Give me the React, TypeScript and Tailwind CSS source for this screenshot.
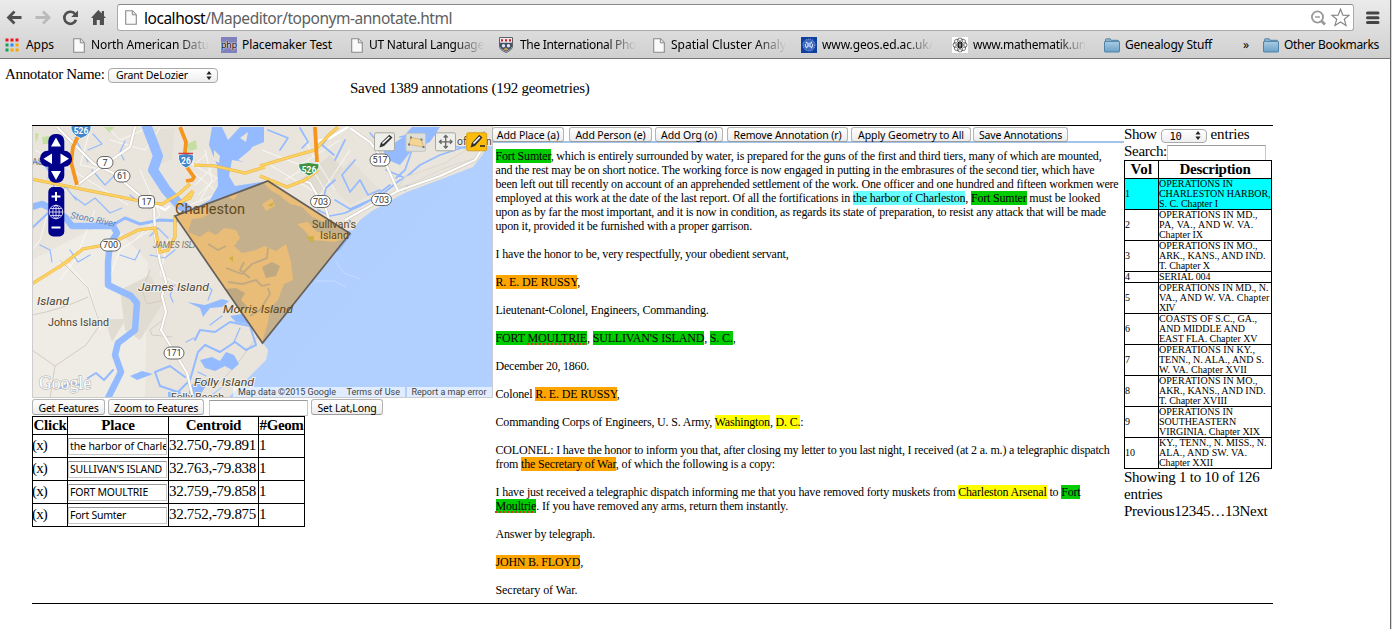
import { useLayoutEffect, useRef } from "react";
import type { ReactNode } from "react";

/* A single line of text whose tracking is tuned so it spans `w` pixels. */
function Fit({ w, children, className = "" }: { w: number; children: ReactNode; className?: string }) {
  const ref = useRef<HTMLSpanElement>(null);
  useLayoutEffect(() => {
    const el = ref.current;
    if (!el) return;
    el.style.letterSpacing = "0px";
    const natural = el.getBoundingClientRect().width;
    const count = el.textContent?.length || 1;
    el.style.letterSpacing = `${(w - natural) / count}px`;
  }, [w]);
  return (
    <span ref={ref} className={`inline-block whitespace-nowrap ${className}`}>
      {children}
    </span>
  );
}

const ui = "font-['Noto_Sans','Open_Sans',sans-serif]";

/* ---------- Browser chrome ---------- */

function PageIcon() {
  return (
    <svg width="12" height="15" viewBox="0 0 12 15" className="shrink-0">
      <path d="M0.7 0.7H7.5L11.3 4.6V14.3H0.7Z" fill="#fafafa" stroke="#8a8a8a" strokeWidth="1.1" />
      <path d="M7.3 0.9V4.8H11.1" fill="#e4e4e4" stroke="#8a8a8a" />
    </svg>
  );
}

function FolderIcon() {
  return (
    <svg width="16" height="15" viewBox="0 0 16 15" className="shrink-0">
      <defs>
        <linearGradient id="folder" x1="0" y1="0" x2="0" y2="1">
          <stop offset="0" stopColor="#a9cce3" />
          <stop offset="1" stopColor="#6ba1c7" />
        </linearGradient>
      </defs>
      <path d="M1.5 4V1.6Q1.5 0.8 2.3 0.8H6.2L7.2 2.3H14.2V4" fill="#8db9d6" stroke="#56829f" />
      <rect x="0.5" y="3.4" width="15" height="10.6" rx="0.6" fill="url(#folder)" stroke="#4f83a8" />
    </svg>
  );
}

function PhpIcon() {
  return (
    <span className="flex h-4 w-4 shrink-0 items-center justify-center bg-[#8080bd] font-['Liberation_Sans',sans-serif] text-[9.5px] leading-none text-black [text-shadow:0_0_1px_#fff,0_0_1px_#fff,0_0_2px_#fff]">
      php
    </span>
  );
}

function CrestIcon() {
  return (
    <svg width="14" height="16" viewBox="0 0 14 16" className="shrink-0">
      <path d="M0.5 0.5H13.5V9Q13.5 13 7 15.5Q0.5 13 0.5 9Z" fill="#e8e8e8" stroke="#5d6166" />
      <path d="M1 1H13V5.5H1Z" fill="#f4e8e8" />
      <path d="M2 2.2h2v2.4H2zM6 2.2h2v2.4H6zM10 2.2h2v2.4h-2z" fill="#c21f2c" />
      <path d="M1 5.8H13V9.5Q12 12.5 7 14.8Q2 12.5 1 9.5Z" fill="#43506b" />
      <circle cx="4.5" cy="8.7" r="1.7" fill="#e1e5ec" />
      <circle cx="9.5" cy="8.7" r="1.7" fill="#e1e5ec" />
      <path d="M4.5 12.4L7 10.5L9.5 12.4L7 13.8Z" fill="#c8a34a" />
    </svg>
  );
}

function SealIcon() {
  return (
    <svg width="16" height="16" viewBox="0 0 16 16" className="shrink-0">
      <rect width="16" height="16" fill="#0f3fa0" />
      <circle cx="8" cy="8" r="6" fill="#3e69bd" stroke="#8ba8e4" strokeWidth="1" strokeDasharray="1.2 1" />
      <path d="M5 5L11 11M11 5L5 11" stroke="#dce6fa" strokeWidth="1.1" />
      <rect x="6.3" y="5.8" width="3.4" height="3.8" fill="#a6bdec" />
      <path d="M4.5 7V10M11.5 7V10" stroke="#c9d8f8" strokeWidth="1" />
    </svg>
  );
}

function FlowerIcon() {
  return (
    <svg width="16" height="16" viewBox="0 0 16 16" className="shrink-0">
      <rect width="16" height="16" fill="#fff" />
      <g fill="none" stroke="#444" strokeWidth="0.7">
        <circle cx="8" cy="3.6" r="2.6" />
        <circle cx="8" cy="12.4" r="2.6" />
        <circle cx="3.6" cy="8" r="2.6" />
        <circle cx="12.4" cy="8" r="2.6" />
        <circle cx="4.9" cy="4.9" r="2.6" />
        <circle cx="11.1" cy="4.9" r="2.6" />
        <circle cx="4.9" cy="11.1" r="2.6" />
        <circle cx="11.1" cy="11.1" r="2.6" />
      </g>
      <path d="M6.5 5V11M8 4.5V11.5M9.5 5V11" stroke="#111" strokeWidth="0.9" />
    </svg>
  );
}

function AppsIcon() {
  return (
    <svg width="14" height="14" viewBox="0 0 14 14" className="shrink-0">
      <path d="M0.5 0.5h3v3h-3zM5.5 0.5h3v3h-3zM10.5 0.5h3v3h-3z" fill="#f0141e" />
      <path d="M0.5 5.5h3v3h-3z" fill="#12a05c" />
      <path d="M5.5 5.5h3v3h-3z" fill="#2f86f6" />
      <path d="M10.5 5.5h3v3h-3zM5.5 10.5h3v3h-3zM10.5 10.5h3v3h-3z" fill="#f9a800" />
      <path d="M0.5 10.5h3v3h-3z" fill="#12a05c" />
    </svg>
  );
}

function Chrome() {
  const fade = "[mask-image:linear-gradient(to_right,#000_74%,transparent_100%)]";
  return (
    <header className={`flex h-[59px] flex-col border-b border-[#777] bg-linear-to-b from-[#ebebeb] to-[#d0d0d0] ${ui}`}>
      <div className="flex h-[31px] items-start pt-1">
        <svg width="117" height="27" viewBox="0 4 117 27" className="shrink-0">
          <path d="M21.500 17.500H9M14.500 11.500L8.500 17.500L14.500 23.500" fill="none" stroke="#505050" strokeWidth="2.8" />
          <path d="M35.500 17.500H48M43 11.500L49 17.500L43 23.500" fill="none" stroke="#bababa" strokeWidth="2.8" />
          <path d="M75.200 14.200A6 6 0 1 0 76 19.800" fill="none" stroke="#505050" strokeWidth="2.7" />
          <path d="M78 10.500V17H71.200Z" fill="#505050" />
          <path d="M91 18L98.300 10L101.800 13.600V11H104V16L106 18H104V25H99.800V20H96.800V25H93V18Z" fill="#505050" />
        </svg>
        <div className="flex h-[27px] w-[1237px] items-center rounded-[3px] border border-[#aaa] border-t-[#8b8b8b] bg-white pl-[7px]">
          <PageIcon />
          <div className="ml-[7px] w-[1166px] text-[15.5px] leading-[22px] text-[#606060]">
            <Fit w={308}>
              <span className="text-black">localhost</span>/Mapeditor/toponym-annotate.html
            </Fit>
          </div>
          <svg width="40" height="20" viewBox="1310 8 40 20" className="shrink-0">
            <circle cx="1317.5" cy="17" r="5.6" fill="none" stroke="#999" strokeWidth="1.8" />
            <path d="M1315 17H1320" stroke="#999" strokeWidth="1.4" />
            <path d="M1321.500 21L1325 24.500" stroke="#999" strokeWidth="2.6" />
            <path d="M1340.500 9.200L1342.900 15.200L1349 15.400L1344.300 19.300L1346 25.400L1340.500 21.900L1335 25.400L1336.700 19.300L1332 15.400L1338.100 15.200Z" fill="#fff" stroke="#858585" strokeWidth="1.2" />
          </svg>
        </div>
        <svg width="14" height="14" viewBox="0 0 14 14" className="mt-[7px] ml-[12px] shrink-0">
          <path d="M1.500 2H12M1.500 6.700H12M1.500 11.400H12" stroke="#444" strokeWidth="3" strokeLinecap="round" />
        </svg>
      </div>
      <div className="flex h-[27px] items-center pt-px pl-[5px] text-[12px] leading-[16px] text-black">
        <div className="flex w-[68px] items-center gap-[7px]">
          <AppsIcon />
          <Fit w={28}>Apps</Fit>
        </div>
        <div className="flex w-[148px] items-center gap-[6px]">
          <PageIcon />
          <Fit w={118} className={fade}>North American Datu</Fit>
        </div>
        <div className="flex w-[130px] items-center gap-[5px]">
          <PhpIcon />
          <Fit w={90}>Placemaker Test</Fit>
        </div>
        <div className="flex w-[148px] items-center gap-[6px]">
          <PageIcon />
          <Fit w={115} className={fade}>UT Natural Language</Fit>
        </div>
        <div className="flex w-[154px] items-center gap-[7px]">
          <CrestIcon />
          <Fit w={116} className={fade}>The International Pho</Fit>
        </div>
        <div className="flex w-[148px] items-center gap-[6px]">
          <PageIcon />
          <Fit w={115} className={fade}>Spatial Cluster Analy</Fit>
        </div>
        <div className="flex w-[151px] items-center gap-[5px]">
          <SealIcon />
          <Fit w={111} className={fade}>www.geos.ed.ac.uk/</Fit>
        </div>
        <div className="flex w-[152px] items-center gap-[5px]">
          <FlowerIcon />
          <Fit w={113} className={fade}>www.mathematik.un</Fit>
        </div>
        <div className="flex w-[139px] items-center gap-[5px]">
          <FolderIcon />
          <Fit w={87}>Genealogy Stuff</Fit>
        </div>
        <span className="w-[20px]">»</span>
        <div className="flex items-center gap-[5px]">
          <FolderIcon />
          <Fit w={95}>Other Bookmarks</Fit>
        </div>
      </div>
    </header>
  );
}

/* ---------- Controls ---------- */

function Stepper() {
  return (
    <svg width="6" height="9" viewBox="0 0 6 9" className="shrink-0">
      <path d="M3 0L5.600 3.600H0.400ZM3 9L5.600 5.400H0.400Z" fill="#222" />
    </svg>
  );
}

function Button({ box, label, w }: { box: string; label: string; w: number }) {
  return (
    <button
      className={`flex shrink-0 items-center justify-center rounded-[3px] border border-[#b4b4b4] border-b-[#9c9c9c] bg-linear-to-b from-white to-[#ececec] pt-[2px] text-[10.5px] leading-[13px] ${ui} ${box}`}
    >
      <Fit w={w}>{label}</Fit>
    </button>
  );
}

/* ---------- Map ---------- */

function Shield({ x, y, label, w = 20 }: { x: number; y: number; label: string; w?: number }) {
  return (
    <g>
      <rect x={x - w / 2} y={y - 6} width={w} height={12} rx={6} fill="#fff" stroke="#666" strokeWidth="1" />
      <text x={x} y={y + 3.3} fontSize="9" textAnchor="middle" fill="#333">{label}</text>
    </g>
  );
}

function Interstate({ x, y, label, w = 18 }: { x: number; y: number; label: string; w?: number }) {
  const h = w / 2;
  return (
    <g>
      <path
        d={`M${x - h} ${y - 5}Q${x} ${y - 8} ${x + h} ${y - 5}Q${x + h + 1} ${y + 4} ${x} ${y + 8}Q${x - h - 1} ${y + 4} ${x - h} ${y - 5}Z`}
        fill="#4285c9"
        stroke="#fff"
        strokeWidth="0.8"
      />
      <text x={x} y={y + 3.5} fontSize="8.500" fontWeight="700" textAnchor="middle" fill="#fff">{label}</text>
    </g>
  );
}

function RoadMap() {
  return (
    <svg width="461" height="272" viewBox="32 126 461 272" className="block shrink-0 font-[Roboto,sans-serif]">
      <defs>
        <linearGradient id="sea" x1="0" y1="0" x2="1" y2="0.8">
          <stop offset="0" stopColor="#9fc3ff" />
          <stop offset="0.4" stopColor="#b0cfff" />
          <stop offset="1" stopColor="#b2d0ff" />
        </linearGradient>
      </defs>
      <rect x="32" y="126" width="461" height="272" fill="#e9e5dd" />
      <path d="M32 260L110 220L148 262L145 398H32Z" fill="#efece5" />
      <path d="M105 319L126 319L112 342ZM120 290L150 275L165 300L140 340L125 330ZM300 180L330 155L345 170L320 195Z" fill="#e1dcd2" />
      <path d="M330 185L350 160L380 190L350 205ZM150 130L175 128L172 160L155 165Z" fill="#e4e0d7" />
      <path d="M185 145L196 140L197 149L190 151ZM42 137L50 136L48 144L43 144ZM35 133L39 134L36 143ZM189 150L191 158L185 155ZM104 127L114 127L110 133Z" fill="#c5dfa3" />

      <g fill="none" stroke="#fff" strokeWidth="0.9" opacity="0.8">
        <path d="M35 150L80 175L128 205M60 170L40 240L32 250M90 130L80 165L105 170M110 130L120 140L150 127M140 170L160 215L135 240M95 210L75 260L60 280M65 260L90 290L100 330M150 230L120 250L105 290M110 140L145 150L160 128" />
        <path d="M168 240L160 275L190 290M185 160L220 180M190 170L215 190M195 185L215 165M198 195L220 175M190 205L215 195M182 152L194 165L205 155M205 150L212 180L200 200" />
        <path d="M262 150L300 165L340 140M270 165L320 195L350 150M300 128L310 150L335 190M285 180L310 165L325 190" />
      </g>
      <g fill="none" stroke="#cfcabf" strokeWidth="0.9">
        <path d="M60 260L88 288L100 325L86 345L55 366L32 350M55 366L50 398M32 315Q60 310 88 297M150 270L142 290L147 304L165 300M163 320L150 330L152 335L172 337M262 330L240 360L218 385" />
      </g>

      <path d="M305 235L353 230L360 220L372 211L397 197L407 192L447 177L473 167L483 154L493 136V398H207L240 372L266 356L268 350L262 342L276 310L290 280L286 262Z" fill="url(#sea)" />
      <g fill="#94bbff">
        <path d="M184 213L210 200L218 186L217 165L209 145L212 127H222L228 140L240 127H264L264 142L252 147L244 162L232 160L229 176L235 186L268 181L300 202L325 232L352 234L340 250L286 280L290 262L262 240L218 240L200 226Z" />
        <path d="M383 150L402 138L412 127L440 127L430 142L412 150L400 165L388 160Z" />
        <path d="M187 302L205 305L222 299L229 301L222 307L210 308L203 317L200 308ZM230 316L242 314L256 320L252 325L236 322ZM200 360L212 357L220 361L226 352L234 355L239 364L232 370L225 366L215 371L205 368ZM130 376L142 371L153 374L137 380ZM200 379L212 379L206 386L198 398L188 398L190 386ZM168 392L180 391L183 398H168Z" />
      </g>
      <path d="M238 160L250 150L262 147V158L246 163Z" fill="#e9e5dd" />
      <path d="M240 138L248 132L246 142ZM214 150L220 156L219 163L214 160Z" fill="#e9e5dd" />
      <g fill="none" stroke="#94baff" strokeLinecap="round" strokeLinejoin="round">
        <path d="M147 127L158 156L153 170L166 190L178 203L190 212" strokeWidth="10" />
        <path d="M32 207L42 204L54 210L66 218L72 226L113 226L117 233L110 244L108 262L108 285L131 296L137 303L135 330L118 343L115 355L121 372L107 400" strokeWidth="6.500" />
        <path d="M113 225L125 218L140 224L160 220L180 221" strokeWidth="3" />
        <path d="M32 228L48 213L55 180L45 165L35 162M195 340L200 330L215 332L230 322L250 326L256 345L246 350L235 342L220 352L205 345L198 352L190 380L178 392L160 386L155 372L170 366L185 377M88 378L96 373L104 380L113 370M60 388L72 383L80 385" strokeWidth="2" />
        <path d="M93 134L102 144L88 150M75 138L88 162M92 170L105 185L118 172M72 195L85 205L95 198L110 213L122 208M130 195L140 203L150 208M40 245L50 250L52 262M70 250L78 262L90 255M120 255L135 260L140 250M150 255L165 258L175 250M125 141L120 152L124 160M32 163L45 161L58 168L48 178M60 197L65 186L76 200M150 236L158 228L168 238M205 284L212 290L208 300M210 325L222 316M240 328L234 342M175 285L170 295L173 302M198 372L206 376M186 342L194 338" strokeWidth="1.200" />
        <path d="M268 130L288 138L280 150M300 128L308 142L302 148M330 135L322 145L334 155M345 140L335 160M355 160L342 175L350 192L360 180L368 195L380 190M318 210L330 216L345 213L360 206L385 192L400 180L415 175M335 200L350 209L370 200L390 185M386 170L405 178L420 165L440 155L470 145L484 132M322 205L326 188L335 180M400 137L430 130L445 145L465 148M412 150L405 170L396 178M405 190L412 175M370 133L380 145L376 155" strokeWidth="1.700" />
      </g>
      <path d="M262 342L250 358L233 378L210 398H228L266 360L268 350Z" fill="#e9e5dd" />
      <path d="M398 187L405 177L445 163L484 139L487 142L476 158L445 168L408 185Z" fill="#e8e4dc" stroke="#d7d2c8" strokeWidth="0.700" />
      <path d="M336 262L344 273L360 279M315 281L334 281L346 287" fill="none" stroke="#c4dcff" strokeWidth="1" />

      <g fill="none" stroke="#c9c2b4" strokeWidth="3.200">
        <path d="M57 127L94 164L113 173L145 200L154 205L155 235L160 262L166 282L162 296L166 312L161 330L176 355L187 373L193 398M135 127L130 147L97 170L76 186" />
        <path d="M300 180L310 183L317 195L324 202L330 223M350 128L370 142L385 162L398 191L370 206L345 220M398 191L440 176L475 160L488 140" />
      </g>
      <g fill="none" stroke="#fff" strokeWidth="2.200">
        <path d="M57 127L94 164L113 173L145 200L154 205L155 235L160 262L166 282L162 296L166 312L161 330L176 355L187 373L193 398M135 127L130 147L97 170L76 186M155 205L165 210L170 206" />
        <path d="M300 180L310 183L317 195L324 202L330 223M350 128L370 142L385 162L398 191L370 206L345 220M398 191L440 176L475 160L488 140M317 141L330 138L348 127" />
      </g>
      <g fill="none" stroke="#e9b444" strokeWidth="3.200">
        <path d="M32 179L145 202L162 204L180 193L190 184M194 165L215 166L245 173L265 167M260 176L287 187L305 180L318 170M260 166L290 157L315 150L330 134L338 127M58 268L83 249L110 244L138 230L155 228L160 252L168 250L175 237L175 215M32 284L70 260M176 207L193 191L190 198L178 203" />
      </g>
      <g fill="none" stroke="#fdd262" strokeWidth="2.200">
        <path d="M32 179L145 202L162 204L180 193L190 184M194 165L215 166L245 173L265 167M260 176L287 187L305 180L318 170M260 166L290 157L315 150L330 134L338 127M58 268L83 249L110 244L138 230L155 228L160 252L168 250L175 237L175 215M32 284L70 260M176 207L193 191L190 198L178 203" />
      </g>
      <g fill="none" stroke="#f6951e" strokeWidth="3.800">
        <path d="M80 132L73 147L71 162L77 185M180 127L186 142L184 163L194 177L192 180L186 181M315 127L317 162" />
      </g>

      <g fontSize="9" fill="#7a7466" fontStyle="italic">
        <text x="153" y="248" textLength="57" lengthAdjust="spacingAndGlyphs">JAMES ISLAND</text>
        <text x="70" y="218" transform="rotate(11 70 218)" fill="#5b82b8" textLength="46" lengthAdjust="spacingAndGlyphs">Stono River</text>
        <text x="32" y="165" fontStyle="normal">AS</text>
      </g>
      <g stroke="#f3f0e9" strokeWidth="2" paintOrder="stroke" fill="#4d4637" fontSize="11.500">
        <text x="138" y="291" fontStyle="italic" textLength="71" lengthAdjust="spacingAndGlyphs">James Island</text>
        <text x="37" y="304.500" fontStyle="italic" textLength="32" lengthAdjust="spacingAndGlyphs">Island</text>
        <text x="48" y="326" fontSize="11" textLength="61" lengthAdjust="spacingAndGlyphs">Johns Island</text>
        <text x="194" y="386" fontStyle="italic" textLength="60" lengthAdjust="spacingAndGlyphs">Folly Island</text>
        <text x="171" y="399.500" fontSize="9.500" textLength="53" lengthAdjust="spacingAndGlyphs">Folly Beach</text>
        <text x="457" y="145" fontSize="10.500">of</text>
        <text x="486" y="145" fontSize="10.500">n</text>
      </g>

      <Interstate x={81} y={130.5} label="526" w={20} />
      <Interstate x={186} y={160} label="26" w={15} />
      <path d="M178.500 153.500H193" stroke="#d23b3b" strokeWidth="1.500" />
      <path d="M298.500 164Q309 161 319 164Q320 171 309 176Q298 171 298.500 164Z" fill="#3f9140" stroke="#fff" strokeWidth="0.800" />
      <text x="309" y="173" fontSize="8.500" fontWeight="700" textAnchor="middle" fill="#fff">526</text>
      <Shield x={105} y={162.5} label="7" w={16} />
      <Shield x={122} y={176} label="61" w={16} />
      <rect x="138.500" y="195.500" width="16" height="12.500" rx="3.500" fill="#fff" stroke="#666" />
      <text x="146.500" y="205.300" fontSize="9" textAnchor="middle" fill="#333">17</text>
      <Shield x={110.5} y={245} label="700" />
      <Shield x={174} y={353} label="171" />
      <Shield x={320.5} y={201.5} label="703" />
      <Shield x={381.5} y={199.5} label="703" />
      <Shield x={380} y={160} label="517" />

      <clipPath id="shape">
        <path d="M175 216L268 181L350 233.500L262.500 343Z" />
      </clipPath>
      <path d="M175 216L268 181L350 233.500L262.500 343Z" fill="#c4b08c" />
      <g clipPath="url(#shape)" fill="#e9bc78">
        <path d="M175 216L190 206L204 202L211 200L206 208L209 214L202 218L192 219L188 232L200 237L208 231L216 235L224 228L236 230L240 238L234 246L242 253L256 250L264 246L276 251L286 244L291 262L293 280L284 284L278 300L270 308L268 322L262 343L215 290Z" />
        <path d="M262 181L268 180L330 217L325 222L312 217L302 207L290 204L279 195L270 190Z" />
        <path d="M297 224L308 222L317 232L335 233L350 236L335 242L312 240L304 230Z" />
        <path d="M262 204L272 198L275 206L266 211ZM228 186L240 190L234 200L226 196Z" />
      </g>
      <g clipPath="url(#shape)" fill="#c0a981">
        <path d="M224 289L236 288L245 293L241 300L247 306L240 312L232 303ZM262 267L272 262L280 266L276 276L266 278Z" />
      </g>
      <path d="M208 244L218 250L226 246M226 268L242 274L252 264L267 258L268 248M228 282L242 284L256 280L262 286L270 284M250 316L260 310L270 294L268 288M244 262L240 270L250 278" clipPath="url(#shape)" fill="none" stroke="#c0a981" strokeWidth="1.800" />
      <path d="M268 205L274 202L272 207ZM306 237L314 236L313 243ZM229 258L233 256L233 262Z" fill="#cdb13c" />
      <path d="M175 216L268 181L350 233.500L262.500 343Z" fill="none" stroke="#65605a" strokeWidth="1.700" />
      <g fill="#62491c">
        <text x="175" y="213.500" fontSize="14" textLength="70" lengthAdjust="spacingAndGlyphs">Charleston</text>
        <text x="223" y="313" fontSize="11.500" fontStyle="italic" textLength="70" lengthAdjust="spacingAndGlyphs">Morris Island</text>
        <text x="312" y="228" fontSize="10.500" textLength="44" lengthAdjust="spacingAndGlyphs">Sullivan's</text>
        <text x="320" y="238.500" fontSize="10.500" textLength="29" lengthAdjust="spacingAndGlyphs">Island</text>
      </g>

      <text x="39" y="388.500" fontSize="18" fill="#fff" stroke="#aaaaa5" strokeWidth="1" paintOrder="stroke" textLength="52" lengthAdjust="spacingAndGlyphs" className="font-['Liberation_Serif',serif]">Google</text>

      <rect x="233" y="387" width="172" height="11" fill="#fff" fillOpacity="0.600" />
      <rect x="407" y="387" width="86" height="11" fill="#fff" fillOpacity="0.600" />
      <g fontSize="9" fill="#444">
        <text x="238" y="395" textLength="98">Map data ©2015 Google</text>
        <text x="346.500" y="395" textLength="53.500">Terms of Use</text>
        <text x="411.500" y="395" textLength="75">Report a map error</text>
      </g>

      <g fill="#00008b">
        <rect x="48.300" y="134" width="16" height="48.700" rx="7" />
        <rect x="40" y="150.700" width="32" height="16" rx="7.500" />
        <rect x="48.300" y="187" width="16" height="49.500" rx="5" />
      </g>
      <path d="M56 137.500L61 146.500H51ZM56 180L61 171H51ZM43.500 158.700L52 153.500V164ZM69 158.700L60.500 153.500V164Z" fill="#fff" />
      <path d="M51.500 196.500H60.500M56 192V201M51.500 227.500H60.500" stroke="#fff" strokeWidth="2" />
      <g fill="none" stroke="#dcdcf5" strokeWidth="0.900">
        <circle cx="56" cy="212" r="6.800" />
        <ellipse cx="56" cy="212" rx="3.200" ry="6.800" />
        <path d="M49 212H63M50.500 208.500H61.500M50.500 215.500H61.500M56 205V219" />
      </g>

      <g stroke="#a9aaa2">
        <rect x="374.500" y="132.800" width="20" height="18" rx="1.500" fill="#eeeeea" />
        <rect x="406" y="133.300" width="19.500" height="18" rx="1.500" fill="#dedfd9" stroke="#c4c5bf" />
        <rect x="435.500" y="132.800" width="20" height="18" rx="1.500" fill="#eeeeea" />
        <rect x="466.700" y="132.800" width="20" height="18" rx="1.500" fill="#fdbb0b" stroke="#d9a11a" />
      </g>
      <path d="M379.500 147.500L380.800 143L389.300 134.800L392.500 137.500L384 146ZM470.500 147.500L471.800 143L479.300 134.800L482.500 137.500L475 146Z" fill="#333" />
      <path d="M382.500 143.500L389.500 137M473.500 143.500L479.800 137" stroke="#fff" strokeWidth="1.600" />
      <path d="M480 146H485" stroke="#222" strokeWidth="1.500" />
      <path d="M411 137.500L421.500 139.500L423.500 147L409 144.500Z" fill="#f5d593" stroke="#d8bb81" />
      <path d="M410 136.500h2v2h-2zM420.500 138.500h2v2h-2zM422.500 146h2v2h-2zM408 143.500h2v2h-2z" fill="#777" />
      <path d="M439.500 141.800H452M445.700 135.500V148M443.700 137.500L445.700 135.500L447.700 137.500M443.700 146L445.700 148L447.700 146M441.500 139.800L439.500 141.800L441.500 143.800M450 139.800L452 141.800L450 143.800" fill="none" stroke="#666" strokeWidth="1.300" />

      <path d="M32.500 126V397.500H492.500V126" fill="none" stroke="#ccc" />
    </svg>
  );
}

/* ---------- Left column: features ---------- */

const features = [
  { place: "the harbor of Charle", w: 98, centroid: "32.750,-79.891" },
  { place: "SULLIVAN'S ISLAND", w: 92, centroid: "32.763,-79.838" },
  { place: "FORT MOULTRIE", w: 78, centroid: "32.759,-79.858" },
  { place: "Fort Sumter", w: 56, centroid: "32.752,-79.875" },
];

function Features() {
  const cell = "border-r border-b border-black";
  return (
    <div className="flex w-[461px] flex-col">
      <RoadMap />
      <div className="flex h-[18px] items-start pt-[1px]">
        <Button box="h-[16px] w-[73px]" label="Get Features" w={60} />
        <Button box="ml-[3px] h-[16px] w-[96px]" label="Zoom to Features" w={84} />
        <div className="mt-[1px] ml-[5px] h-[16px] w-[99px] border border-[#c8c8c8] border-t-[#999] bg-white" />
        <Button box="ml-[3px] h-[16px] w-[72px]" label="Set Lat,Long" w={59} />
      </div>
      <div className="w-[273px] border-t border-l border-black text-[15px]">
        <div className="flex h-[18px] text-center leading-[17px] font-bold">
          <div className={`w-[35px] ${cell}`}><Fit w={33}>Click</Fit></div>
          <div className={`w-[101px] ${cell}`}><Fit w={33.5}>Place</Fit></div>
          <div className={`w-[90px] ${cell}`}><Fit w={55.5}>Centroid</Fit></div>
          <div className={`w-[46px] ${cell}`}><Fit w={44}>#Geom</Fit></div>
        </div>
        {features.map((f) => (
          <div key={f.place} className="flex h-[23px] leading-[21px]">
            <div className={`w-[35px] ${cell}`}><Fit w={15} className="-ml-px">(x)</Fit></div>
            <div className={`flex w-[101px] pt-[3px] ${cell}`}>
              <div className={`h-[17px] w-[99px] overflow-hidden border border-[#c8c8c8] border-t-[#999] pl-[1px] text-[10.5px] leading-[15px] ${ui}`}>
                <Fit w={f.w}>{f.place}</Fit>
              </div>
            </div>
            <div className={`w-[90px] ${cell}`}><Fit w={87}>{f.centroid}</Fit></div>
            <div className={`w-[46px] ${cell}`}>1</div>
          </div>
        ))}
      </div>
    </div>
  );
}

/* ---------- Middle column: annotated text ---------- */

function Place({ children }: { children: ReactNode }) {
  return <span className="bg-[#00cc00]">{children}</span>;
}
function Person({ children }: { children: ReactNode }) {
  return <span className="bg-[#ffa500]">{children}</span>;
}
function Pending({ children }: { children: ReactNode }) {
  return <span className="bg-[#ffff00]">{children}</span>;
}
const typo = "underline decoration-dotted decoration-[#d03a20] decoration-[1.5px] underline-offset-[1px]";

function Document() {
  return (
    <div className="flex w-[631px] flex-col">
      <div className="flex h-[17px] items-start border-b-2 border-[#a3c4e6] pt-[1px]">
        <Button box="-ml-px h-[15px] w-[72px]" label="Add Place (a)" w={62.5} />
        <Button box="ml-[5px] h-[15px] w-[83px]" label="Add Person (e)" w={70} />
        <Button box="ml-[3px] h-[15px] w-[68px]" label="Add Org (o)" w={56} />
        <Button box="ml-[4px] h-[15px] w-[121px]" label="Remove Annotation (r)" w={108} />
        <Button box="ml-[3px] h-[15px] w-[120px]" label="Apply Geometry to All" w={106} />
        <Button box="ml-[2px] h-[15px] w-[95px]" label="Save Annotations" w={83} />
      </div>
      <div className="flex flex-col gap-[14px] pt-[6px] pl-[2.5px] text-[12px] leading-[14px]">
        <div className="flex flex-col items-start">
          <Fit w={606}><Place>Fort Sumter</Place>, which is entirely surrounded by water, is prepared for the guns of the first and third tiers, many of which are mounted,</Fit>
          <Fit w={599}>and the rest may be on short notice. The working force is now engaged in putting in the embrasures of the second tier, which have</Fit>
          <Fit w={623}>been left out till recently on account of an apprehended settlement of the work. One officer and one hundred and fifteen workmen were</Fit>
          <Fit w={604.5}>employed at this work at the date of the last report. Of all the fortifications in <span className="bg-[#66ffff]">the harbor of Charleston</span>, <Place>Fort Sumter</Place> must be looked</Fit>
          <Fit w={610.5}>upon as by far the most important, and it is now in condition, as regards its state of preparation, to resist any attack that will be made</Fit>
          <Fit w={256.5}>upon it, provided it be furnished with a proper garrison.</Fit>
        </div>
        <div className="flex"><Fit w={293}>I have the honor to be, very respectfully, your obedient servant,</Fit></div>
        <div className="flex"><Fit w={84.5}><Person>R. E. DE RUSSY</Person>,</Fit></div>
        <div className="flex"><Fit w={213}>Lieutenant-Colonel, Engineers, Commanding.</Fit></div>
        <div className="flex"><Fit w={240}><Place>FORT <span className={typo}>MOULTRIE</span></Place>, <Place>SULLIVAN'S ISLAND</Place>, <Place>S. C.</Place>,</Fit></div>
        <div className="flex"><Fit w={93.5}>December 20, 1860.</Fit></div>
        <div className="flex"><Fit w={124}>Colonel <Person>R. E. DE RUSSY</Person>,</Fit></div>
        <div className="flex"><Fit w={308}>Commanding Corps of Engineers, U. S. Army, <Pending>Washington</Pending>, <Pending>D. C.</Pending>:</Fit></div>
        <div className="flex flex-col items-start">
          <Fit w={614}>COLONEL: I have the honor to inform you that, after closing my letter to you last night, I received (at 2 a. m.) a telegraphic dispatch</Fit>
          <Fit w={279.5}>from <Person>the Secretary of War</Person>, of which the following is a copy:</Fit>
        </div>
        <div className="flex flex-col items-start">
          <Fit w={585}>I have just received a telegraphic dispatch informing me that you have removed forty muskets from <Pending>Charleston Arsenal</Pending> to <Place>Fort</Place></Fit>
          <Fit w={292.5}><Place><span className={typo}>Moultrie</span></Place>. If you have removed any arms, return them instantly.</Fit>
        </div>
        <div className="flex"><Fit w={99.5}>Answer by telegraph.</Fit></div>
        <div className="flex"><Fit w={87.5}><Person>JOHN B. FLOYD</Person>,</Fit></div>
        <div className="flex"><Fit w={82}>Secretary of War.</Fit></div>
      </div>
    </div>
  );
}

/* ---------- Right column: volumes ---------- */

const volumes: [string, number][][] = [
  [["OPERATIONS IN", 74], ["CHARLESTON HARBOR,", 111.5], ["S. C. Chapter I", 59]],
  [["OPERATIONS IN MD.,", 98.5], ["PA, VA., AND W. VA.", 94.5], ["Chapter IX", 44]],
  [["OPERATIONS IN MO.,", 98.5], ["ARK., KANS., AND IND.", 106.5], ["T. Chapter X", 51]],
  [["SERIAL 004", 51.5]],
  [["OPERATIONS IN MD., N.", 109.5], ["VA., AND W. VA. Chapter", 110.5], ["XIV", 16]],
  [["COASTS OF S.C., GA.,", 98], ["AND MIDDLE AND", 86], ["EAST FLA. Chapter XV", 98.5]],
  [["OPERATIONS IN KY.,", 96], ["TENN., N. ALA., AND S.", 105], ["W. VA. Chapter XVII", 88]],
  [["OPERATIONS IN MO.,", 98.5], ["AKR., KANS., AND IND.", 106.5], ["T. Chapter XVIII", 68]],
  [["OPERATIONS IN", 74], ["SOUTHEASTERN", 77], ["VIRGINIA. Chapter XIX", 101]],
  [["KY., TENN., N. MISS., N.", 107.5], ["ALA., AND SW. VA.", 88], ["Chapter XXII", 54]],
];

function Volumes() {
  return (
    <div className="flex w-[149px] flex-col text-[15px] leading-[17px]">
      <div className="flex h-[17px] items-center">
        <Fit w={32.5}>Show</Fit>
        <div className="mt-[2px] ml-[4px] flex h-[14px] w-[46px] items-center justify-between rounded-[4px] border border-[#aaa] bg-linear-to-b from-white to-[#eee] pr-[5px] pl-[8px] font-['DejaVu_Sans_Mono',monospace] text-[10.5px] leading-[12px]">
          <Fit w={12}>10</Fit>
          <Stepper />
        </div>
        <Fit w={39} className="ml-[4px]">entries</Fit>
      </div>
      <div className="flex h-[17px] items-start">
        <Fit w={43}>Search:</Fit>
        <div className="mt-[2px] h-[15px] w-[99px] border border-b-0 border-[#c8c8c8] border-t-[#999]" />
      </div>
      <div className="flex w-[148px] flex-col border-t border-l border-black">
        <div className="flex h-[18px] text-center font-bold">
          <div className="w-[34px] border-r border-b border-black"><Fit w={22}>Vol</Fit></div>
          <div className="w-[113px] border-r border-b border-black"><Fit w={71}>Description</Fit></div>
        </div>
        {volumes.map((lines, i) => (
          <div key={i} className={`flex text-[10px] leading-[10px] ${i === 0 ? "bg-[#00ffff]" : ""}`}>
            <div className="flex w-[34px] items-center border-r border-b border-black">{i + 1}</div>
            <div className="flex w-[113px] flex-col items-start border-r border-b border-black">
              {lines.map(([text, w]) => (
                <Fit key={text} w={w}>{text}</Fit>
              ))}
            </div>
          </div>
        ))}
      </div>
      <div className="flex flex-col items-start">
        <Fit w={135.5}>Showing 1 to 10 of 126</Fit>
        <Fit w={38.5}>entries</Fit>
        <Fit w={143.5}>Previous12345…13Next</Fit>
      </div>
    </div>
  );
}

export default function App() {
  return (
    <div className="flex h-[629px] w-[1392px] overflow-hidden bg-white font-['Liberation_Serif',serif] text-[15px] leading-[17px] text-black">
      <div className="flex w-[1390px] flex-col">
        <Chrome />
        <div className="flex h-[66px] items-start">
          <div className="flex w-[350px] items-center pt-[7px] pl-[5px]">
            <Fit w={99.5}>Annotator Name:</Fit>
            <div className={`mt-px ml-[3.5px] flex h-[15px] w-[110px] items-center justify-between rounded-[4px] border border-[#aaa] bg-linear-to-b from-white to-[#eee] pr-[5px] pl-[7px] text-[10.5px] leading-[13px] ${ui}`}>
              <Fit w={72}>Grant DeLozier</Fit>
              <Stepper />
            </div>
          </div>
          <div className="pt-[21px]"><Fit w={239.5}>Saved 1389 annotations (192 geometries)</Fit></div>
        </div>
        <main className="ml-[32px] flex h-[479px] w-[1241px] border-t border-b border-black">
          <Features />
          <Document />
          <Volumes />
        </main>
      </div>
      <div className="w-[2px] border-l border-[#666] bg-[#d5dad4]" />
    </div>
  );
}
